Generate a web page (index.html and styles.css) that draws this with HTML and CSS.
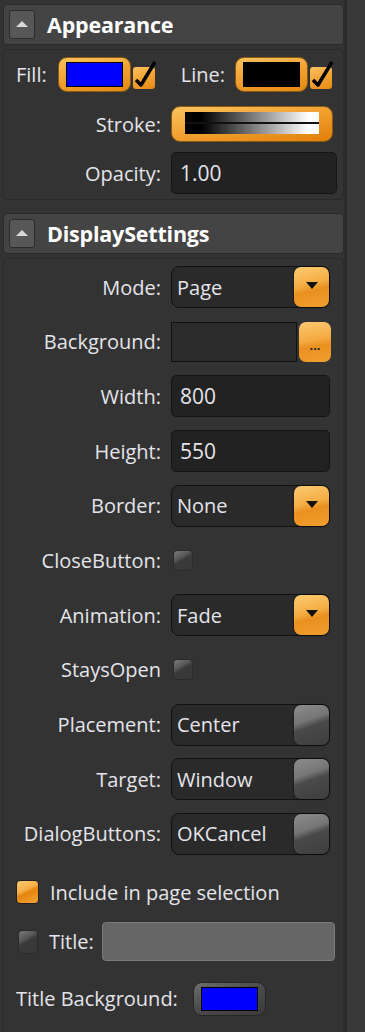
FILE: index.html
```html
<!DOCTYPE html>
<html lang="en">
<head>
    <meta charset="UTF-8">
    <meta name="viewport" content="width=device-width, initial-scale=1.0">
    <title>Properties</title>
    <link rel="stylesheet" href="styles.css">
</head>
<body>
    <div class="panel">
        <div class="section-header">
            <span class="collapse-btn"></span>
            <span class="section-title">Appearance</span>
        </div>
        <div class="section-body appearance">
            <div class="fill-row">
                <span class="prop-label">Fill:</span>
                <span class="swatch"><span class="swatch-color blue"></span></span>
                <span class="check-on">
                    <svg width="26" height="28" viewBox="0 0 26 28"><path d="M5 21 L10 26 L24 3" fill="none" stroke="#000" stroke-width="3.5" stroke-linejoin="round"/></svg>
                </span>
                <span class="prop-label line-label">Line:</span>
                <span class="swatch"><span class="swatch-color black"></span></span>
                <span class="check-on">
                    <svg width="26" height="28" viewBox="0 0 26 28"><path d="M5 21 L10 26 L24 3" fill="none" stroke="#000" stroke-width="3.5" stroke-linejoin="round"/></svg>
                </span>
            </div>
            <div class="prop-row stroke-row">
                <span class="prop-label">Stroke:</span>
                <div class="stroke-picker"><div class="stroke-gradient"></div></div>
            </div>
            <div class="prop-row">
                <span class="prop-label">Opacity:</span>
                <div class="text-box wide">1.00</div>
            </div>
        </div>

        <div class="section-header second">
            <span class="collapse-btn"></span>
            <span class="section-title">DisplaySettings</span>
        </div>
        <div class="section-body display">
            <div class="prop-row">
                <span class="prop-label">Mode:</span>
                <div class="combo"><span>Page</span><span class="drop-btn"></span></div>
            </div>
            <div class="prop-row">
                <span class="prop-label">Background:</span>
                <div class="brush-picker"><span class="brush-box"></span><span class="dots-btn">...</span></div>
            </div>
            <div class="prop-row">
                <span class="prop-label">Width:</span>
                <div class="text-box">800</div>
            </div>
            <div class="prop-row">
                <span class="prop-label">Height:</span>
                <div class="text-box">550</div>
            </div>
            <div class="prop-row">
                <span class="prop-label">Border:</span>
                <div class="combo"><span>None</span><span class="drop-btn"></span></div>
            </div>
            <div class="prop-row check-row">
                <span class="prop-label">CloseButton:</span>
                <span class="check-off"></span>
            </div>
            <div class="prop-row">
                <span class="prop-label">Animation:</span>
                <div class="combo"><span>Fade</span><span class="drop-btn"></span></div>
            </div>
            <div class="prop-row check-row">
                <span class="prop-label">StaysOpen</span>
                <span class="check-off"></span>
            </div>
            <div class="prop-row">
                <span class="prop-label">Placement:</span>
                <div class="combo disabled"><span>Center</span><span class="drop-btn"></span></div>
            </div>
            <div class="prop-row">
                <span class="prop-label">Target:</span>
                <div class="combo disabled"><span>Window</span><span class="drop-btn"></span></div>
            </div>
            <div class="prop-row">
                <span class="prop-label">DialogButtons:</span>
                <div class="combo disabled"><span>OKCancel</span><span class="drop-btn"></span></div>
            </div>

            <div class="option-row include">
                <span class="check-orange"></span>
                <span>Include in page selection</span>
            </div>
            <div class="option-row title">
                <span class="check-off"></span>
                <span>Title:</span>
                <span class="title-box"></span>
            </div>
            <div class="option-row title-bg">
                <span>Title Background:</span>
                <span class="swatch gray"><span class="swatch-color blue"></span></span>
            </div>
        </div>
    </div>
</body>
</html>
```

FILE: styles.css
```css
body {
    margin: 0;
    background: #393939;
    font-family: 'Open Sans', sans-serif;
    font-size: 20px;
    color: #e4e4ea;
}
.panel {
    width: 347px;
    min-height: 1032px;
    box-sizing: border-box;
    background: #333;
    border-right: 3px solid #2b2b2b;
    padding: 4px 0 0 3px;
}
.section-header {
    height: 41px;
    box-sizing: border-box;
    display: flex;
    align-items: center;
    gap: 12px;
    padding-left: 5px;
    background: #444;
    border: 1px solid #2a2a2a;
    border-radius: 4px;
}
.section-header.second {
    margin-top: 13px;
}
.collapse-btn {
    width: 26px;
    height: 29px;
    box-sizing: border-box;
    background: #575757;
    border: 1px solid #2b2b2b;
    border-radius: 3px;
    position: relative;
}
.collapse-btn::after {
    content: '';
    position: absolute;
    left: 6px;
    top: 10px;
    border-left: 6px solid transparent;
    border-right: 6px solid transparent;
    border-bottom: 6px solid #d8d8d8;
}
.section-title {
    font-size: 21.5px;
    font-weight: 700;
    color: #fff;
    letter-spacing: -0.2px;
}
.section-body {
    margin-top: 4px;
    border: 1px solid #2a2a2a;
    border-radius: 4px;
}
.appearance {
    padding: 7px 0 5px;
}
.display {
    padding: 7px 0 30px;
    min-height: 760px;
    display: flex;
    flex-direction: column;
    gap: 12.7px;
}
.fill-row {
    display: flex;
    align-items: center;
    height: 35px;
    padding-left: 12px;
}
.line-label {
    margin-left: 26px;
}
.swatch {
    width: 73px;
    height: 35px;
    box-sizing: border-box;
    margin-left: 11px;
    padding: 4px 7px;
    border-radius: 9px;
    background: linear-gradient(170deg, #fbc25e 0%, #f1a030 50%, #e58a12 100%);
    border: 1px solid #8a5a14;
    display: flex;
}
.line-label + .swatch {
    margin-left: 10px;
}
.swatch.gray {
    background: linear-gradient(160deg, #6e6e6e 0%, #4c4c4c 45%, #3a3a3a 100%);
    border-color: #262626;
    padding: 4px 7px;
}
.swatch-color {
    flex: 1;
    border: 1px solid #000;
}
.swatch-color.blue {
    background: #0000fe;
}
.swatch-color.black {
    background: #000;
}
.check-on {
    width: 22px;
    height: 22px;
    margin-left: 2px;
    margin-top: 6px;
    border-radius: 3px;
    background: linear-gradient(160deg, #fbc25e 0%, #f1a030 55%, #e58a12 100%);
    position: relative;
}
.check-on svg {
    position: absolute;
    left: -2px;
    top: -8px;
}
.prop-row {
    display: grid;
    grid-template-columns: 157px 1fr;
    column-gap: 10px;
    align-items: center;
    min-height: 42px;
}
.appearance .stroke-row {
    min-height: 0;
    margin-top: 14px;
}
.appearance .stroke-row + .prop-row {
    margin-top: 10px;
}
.prop-label {
    text-align: right;
    white-space: nowrap;
}
.stroke-picker {
    width: 162px;
    height: 36px;
    box-sizing: border-box;
    padding: 5px 13px 7px;
    border-radius: 9px;
    background: linear-gradient(170deg, #fbc25e 0%, #f1a030 50%, #e27f08 100%);
    border: 1px solid #8a5a14;
}
.stroke-gradient {
    height: 100%;
    background: linear-gradient(to right, #000 12%, #fff 92%);
    position: relative;
}
.stroke-gradient::after {
    content: '';
    position: absolute;
    left: 0;
    right: 0;
    top: 10px;
    height: 2px;
    background: #111;
}
.text-box {
    width: 159px;
    height: 42px;
    box-sizing: border-box;
    padding-left: 8px;
    display: flex;
    align-items: center;
    background: #222;
    border: 1px solid #151515;
    border-radius: 5px;
    font-size: 21px;
}
.text-box.wide {
    width: 166px;
}
.combo {
    width: 159px;
    height: 42px;
    box-sizing: border-box;
    padding-left: 5px;
    display: flex;
    align-items: center;
    justify-content: space-between;
    background: #2a2a2a;
    border: 1px solid #111;
    border-radius: 8px;
    font-size: 20px;
}
.drop-btn {
    width: 35px;
    height: 40px;
    border-radius: 7px;
    background: linear-gradient(165deg, #fccb72 0%, #f5ae45 42%, #ea9020 58%, #f0a030 100%);
    position: relative;
    box-shadow: 0 0 2px #000;
}
.drop-btn::after {
    content: '';
    position: absolute;
    left: 12px;
    top: 15px;
    border-left: 6px solid transparent;
    border-right: 6px solid transparent;
    border-top: 7px solid #111;
}
.combo.disabled .drop-btn {
    background: linear-gradient(160deg, #8c8c8c 0%, #767676 38%, #4a4a4a 52%, #3d3d3d 100%);
}
.combo.disabled .drop-btn::after {
    display: none;
}
.brush-picker {
    display: flex;
    align-items: center;
    gap: 2px;
}
.brush-box {
    width: 126px;
    height: 40px;
    box-sizing: border-box;
    background: #2c2c2c;
    border: 1px solid #111;
}
.dots-btn {
    width: 32px;
    height: 40px;
    box-sizing: border-box;
    border-radius: 7px;
    background: linear-gradient(170deg, #fbc872 0%, #f4aa40 45%, #ea9020 60%, #f0a030 100%);
    color: #222;
    font-size: 13px;
    font-weight: 700;
    line-height: 1;
    display: flex;
    justify-content: center;
    align-items: flex-end;
    padding-bottom: 10px;
}
.check-off {
    width: 20px;
    height: 21px;
    box-sizing: border-box;
    border-radius: 4px;
    border: 1px solid #2a2a2a;
    background: linear-gradient(150deg, #7a7a7a 0%, #575757 35%, #3a3a3a 48%, #383838 100%);
}
.check-row .check-off {
    margin-left: 2px;
}
.option-row {
    display: flex;
    align-items: center;
    padding-left: 12px;
}
.option-row.include {
    margin-top: 11px;
    gap: 11px;
}
.check-orange {
    width: 23px;
    height: 24px;
    box-sizing: border-box;
    border-radius: 4px;
    border: 1px solid #222;
    background: linear-gradient(155deg, #fccb72 0%, #f5ae45 40%, #e4850c 52%, #f2a436 100%);
}
.option-row.title {
    margin-top: 4px;
    gap: 11px;
    padding-left: 14px;
    padding-right: 8px;
}
.option-row.title .check-off {
    height: 24px;
}
.title-box {
    flex: 1;
    height: 39px;
    box-sizing: border-box;
    margin-left: -3px;
    background: #666;
    border: 1px solid #7a7a7a;
    border-radius: 4px;
}
.option-row.title-bg {
    margin-top: 8px;
    gap: 15px;
}
.option-row.title-bg .swatch {
    margin-left: 0;
    height: 34px;
}
```
